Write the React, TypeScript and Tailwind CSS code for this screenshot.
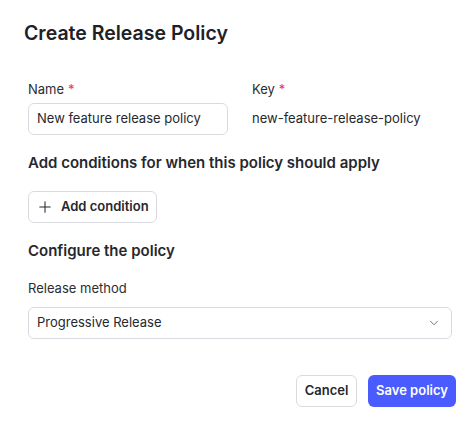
import { Plus, ChevronDown } from "lucide-react";

const Label = ({ text, required }: { text: string; required?: boolean }) => (
  <div className="h-5 text-[13px] leading-5 text-[#2b2d33]">
    {text}
    {required && <span className="ml-1 text-[#e5336b]">*</span>}
  </div>
);

export default function App() {
  return (
    <div
      className="w-[470px] h-[426px] bg-white text-[#26282e]"
      style={{ fontFamily: "Inter, 'Noto Sans', sans-serif" }}
    >
      <div className="pl-6 pr-[14px] pt-[19px]">
        <h1 className="text-[19.5px] leading-7 font-semibold text-[#1f2126]">
          Create Release Policy
        </h1>

        <div className="pl-1 pr-1 mt-8">
          <div className="grid grid-cols-2 gap-6">
            <div className="flex flex-col gap-1">
              <Label text="Name" required />
              <div className="h-8 rounded-md border border-[#d9dbe1] px-2 flex items-center text-[13px]">
                New feature release policy
              </div>
            </div>
            <div className="flex flex-col gap-1">
              <Label text="Key" required />
              <div className="h-8 flex items-center text-[13px]">
                new-feature-release-policy
              </div>
            </div>
          </div>

          <h2 className="mt-4 text-[15px] leading-6 font-semibold">
            Add conditions for when this policy should apply
          </h2>

          <button className="mt-4 h-8 w-[129px] rounded-md border border-[#d9dbe1] flex items-center gap-[7px] pl-[7px] text-[13px] font-semibold whitespace-nowrap">
            <Plus size={18} strokeWidth={1.4} />
            Add condition
          </button>

          <h2 className="mt-4 text-[15px] leading-6 font-semibold">Configure the policy</h2>

          <div className="mt-[15px]">
            <Label text="Release method" />
            <div className="mt-[9px] h-8 rounded-md border border-[#d9dbe1] px-2 flex items-center justify-between text-[13px]">
              Progressive Release
              <ChevronDown size={14} strokeWidth={1.5} className="mr-[2px] text-[#5c5f66]" />
            </div>
          </div>
        </div>

        <div className="mt-9 flex justify-end gap-[11px]">
          <button className="h-8 w-[61px] rounded-md border border-[#d9dbe1] text-[13px] font-semibold">
            Cancel
          </button>
          <button className="h-8 w-[88px] rounded-md bg-[#4a5cff] text-white text-[13px] font-semibold">
            Save policy
          </button>
        </div>
      </div>
    </div>
  );
}
